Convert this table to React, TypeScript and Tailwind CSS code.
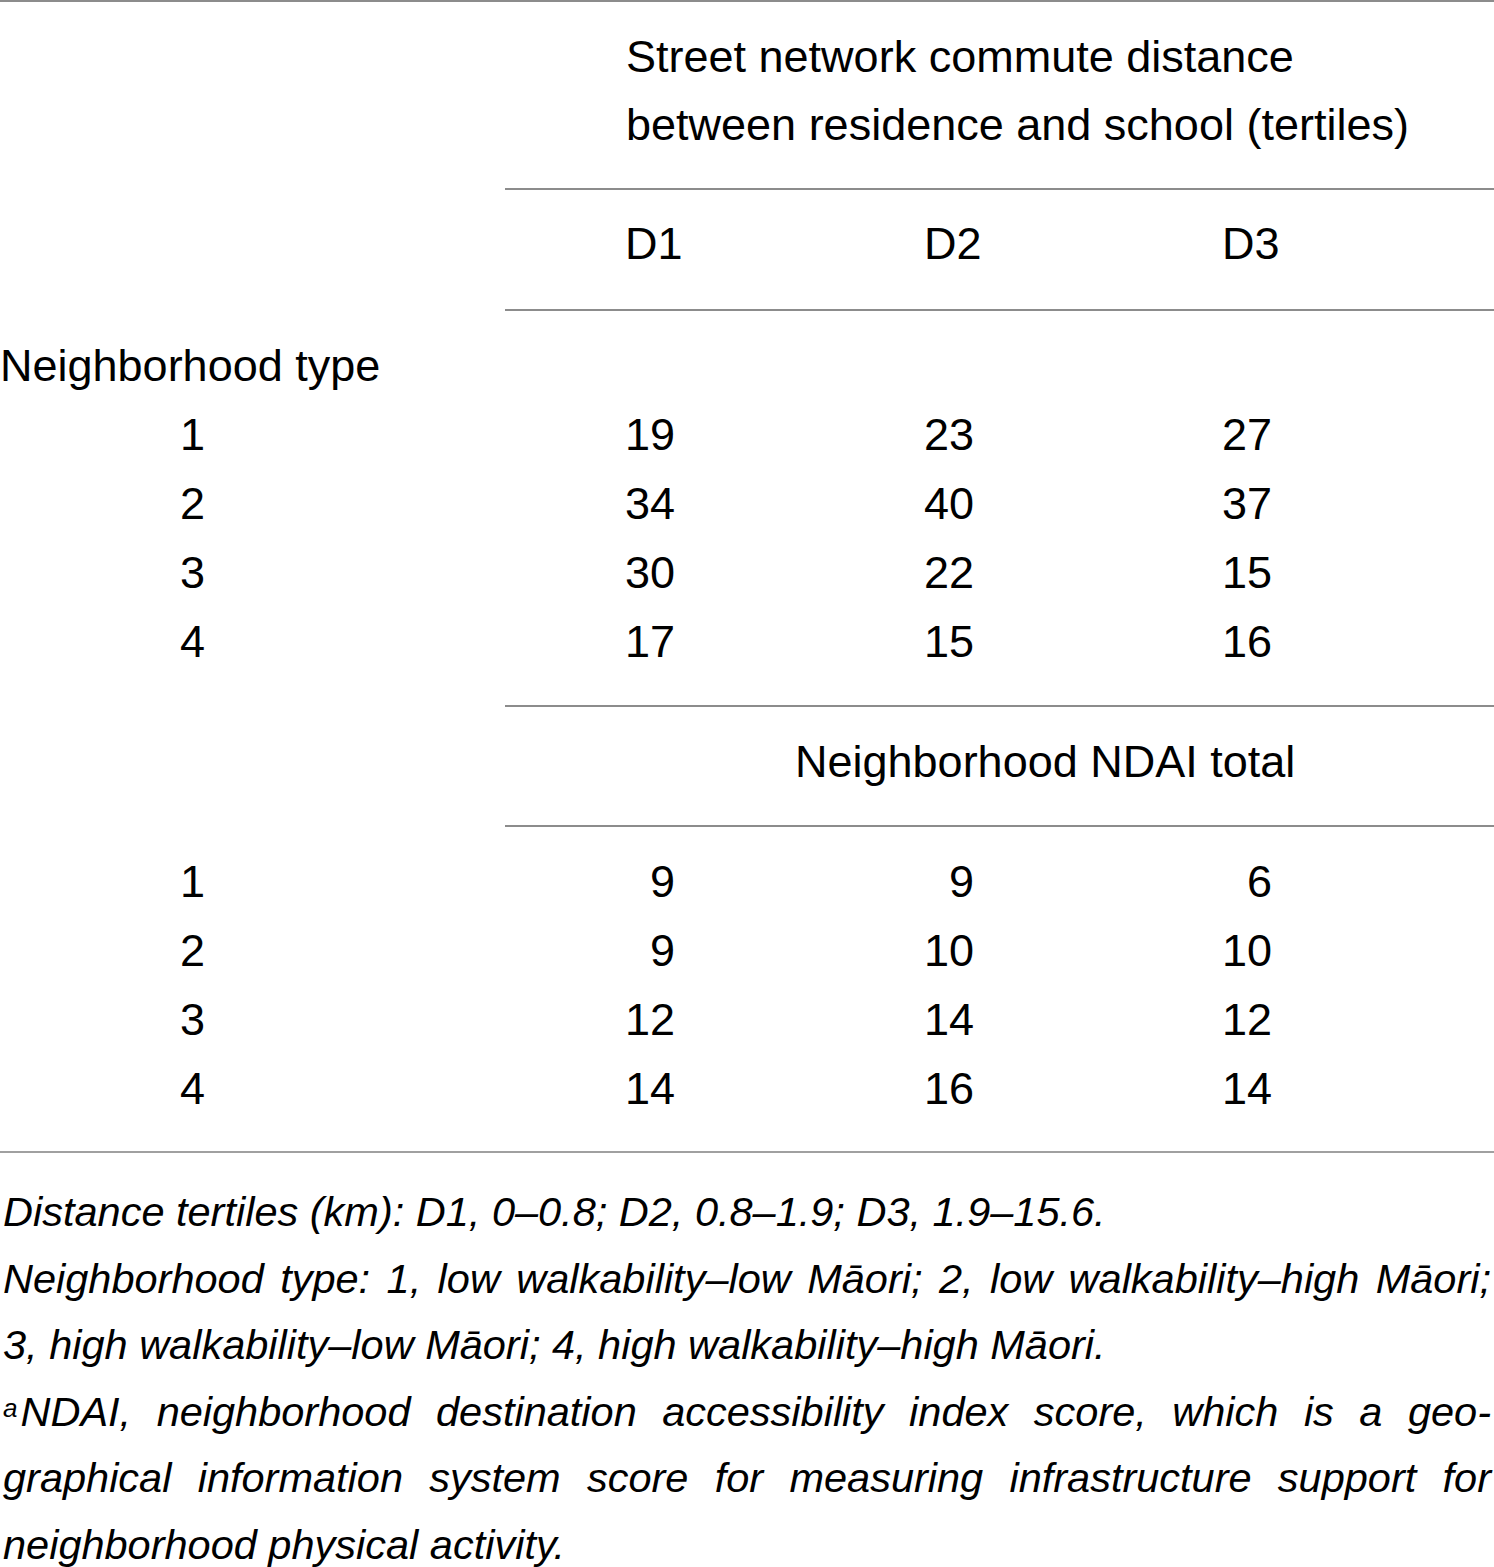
import React from "react";

type Row = { label: string; values: string[] };

const DISTANCE_ROWS: Row[] = [
  { label: "1", values: ["19", "23", "27"] },
  { label: "2", values: ["34", "40", "37"] },
  { label: "3", values: ["30", "22", "15"] },
  { label: "4", values: ["17", "15", "16"] },
];

const NDAI_ROWS: Row[] = [
  { label: "1", values: ["9", "9", "6"] },
  { label: "2", values: ["9", "10", "10"] },
  { label: "3", values: ["12", "14", "12"] },
  { label: "4", values: ["14", "16", "14"] },
];

function Rule({ indent = false }: { indent?: boolean }) {
  return <div className={indent ? "ml-[505px] h-[2px] bg-[#8c8c8c]" : "h-[2px] bg-[#8c8c8c]"} />;
}

function DataRows({ rows }: { rows: Row[] }) {
  return (
    <>
      {rows.map(row => (
        <div key={row.label} className="grid grid-cols-[625px_299px_298px_1fr] leading-[69px]">
          <div className="pl-[180px]">{row.label}</div>
          {row.values.map((v, i) => (
            <div key={i}>
              <span className="inline-block w-[50px] text-right">{v}</span>
            </div>
          ))}
        </div>
      ))}
    </>
  );
}

function JustLine({ children }: { children: React.ReactNode }) {
  return <div className="text-justify [text-align-last:justify]">{children}</div>;
}

export default function App() {
  return (
    <div className="w-[1494px] min-h-[1567px] bg-white text-black font-['Liberation_Sans',Arial,sans-serif]">
      <Rule />
      <div className="text-[45px]">
        {/* column header */}
        <div className="pl-[626px] pt-[21px] pb-[29px] leading-[68px]">
          Street network commute distance
          <br />
          between residence and school (tertiles)
        </div>
        <Rule indent />
        <div className="grid grid-cols-[625px_299px_298px_1fr] pt-[20px] pb-[31px] leading-[68px]">
          <div />
          <div>D1</div>
          <div>D2</div>
          <div>D3</div>
        </div>
        <Rule indent />

        <div className="pt-[20px] pb-[29px]">
          <div className="leading-[69px]">Neighborhood type</div>
          <DataRows rows={DISTANCE_ROWS} />
        </div>
        <Rule indent />
        <div className="pl-[795px] pt-[21px] pb-[29px] leading-[68px]">Neighborhood NDAI total</div>
        <Rule indent />
        <div className="pt-[20px] pb-[28px]">
          <DataRows rows={NDAI_ROWS} />
        </div>
      </div>
      <div className="h-[2px] bg-[#a0a0a0]" />

      {/* footnotes */}
      <div className="px-[3px] pt-[26px] text-[41.5px] italic leading-[66.5px]">
        <div>Distance tertiles (km): D1, 0–0.8; D2, 0.8–1.9; D3, 1.9–15.6.</div>
        <JustLine>Neighborhood type: 1, low walkability–low Māori; 2, low walkability–high Māori;</JustLine>
        <div>3, high walkability–low Māori; 4, high walkability–high Māori.</div>
        <JustLine>
          <span className="relative top-[-9px] text-[26px] leading-[0] pr-[3px]">a</span>NDAI, neighborhood destination accessibility index score, which is a geo-
        </JustLine>
        <JustLine>graphical information system score for measuring infrastructure support for</JustLine>
        <div>neighborhood physical activity.</div>
      </div>
    </div>
  );
}
